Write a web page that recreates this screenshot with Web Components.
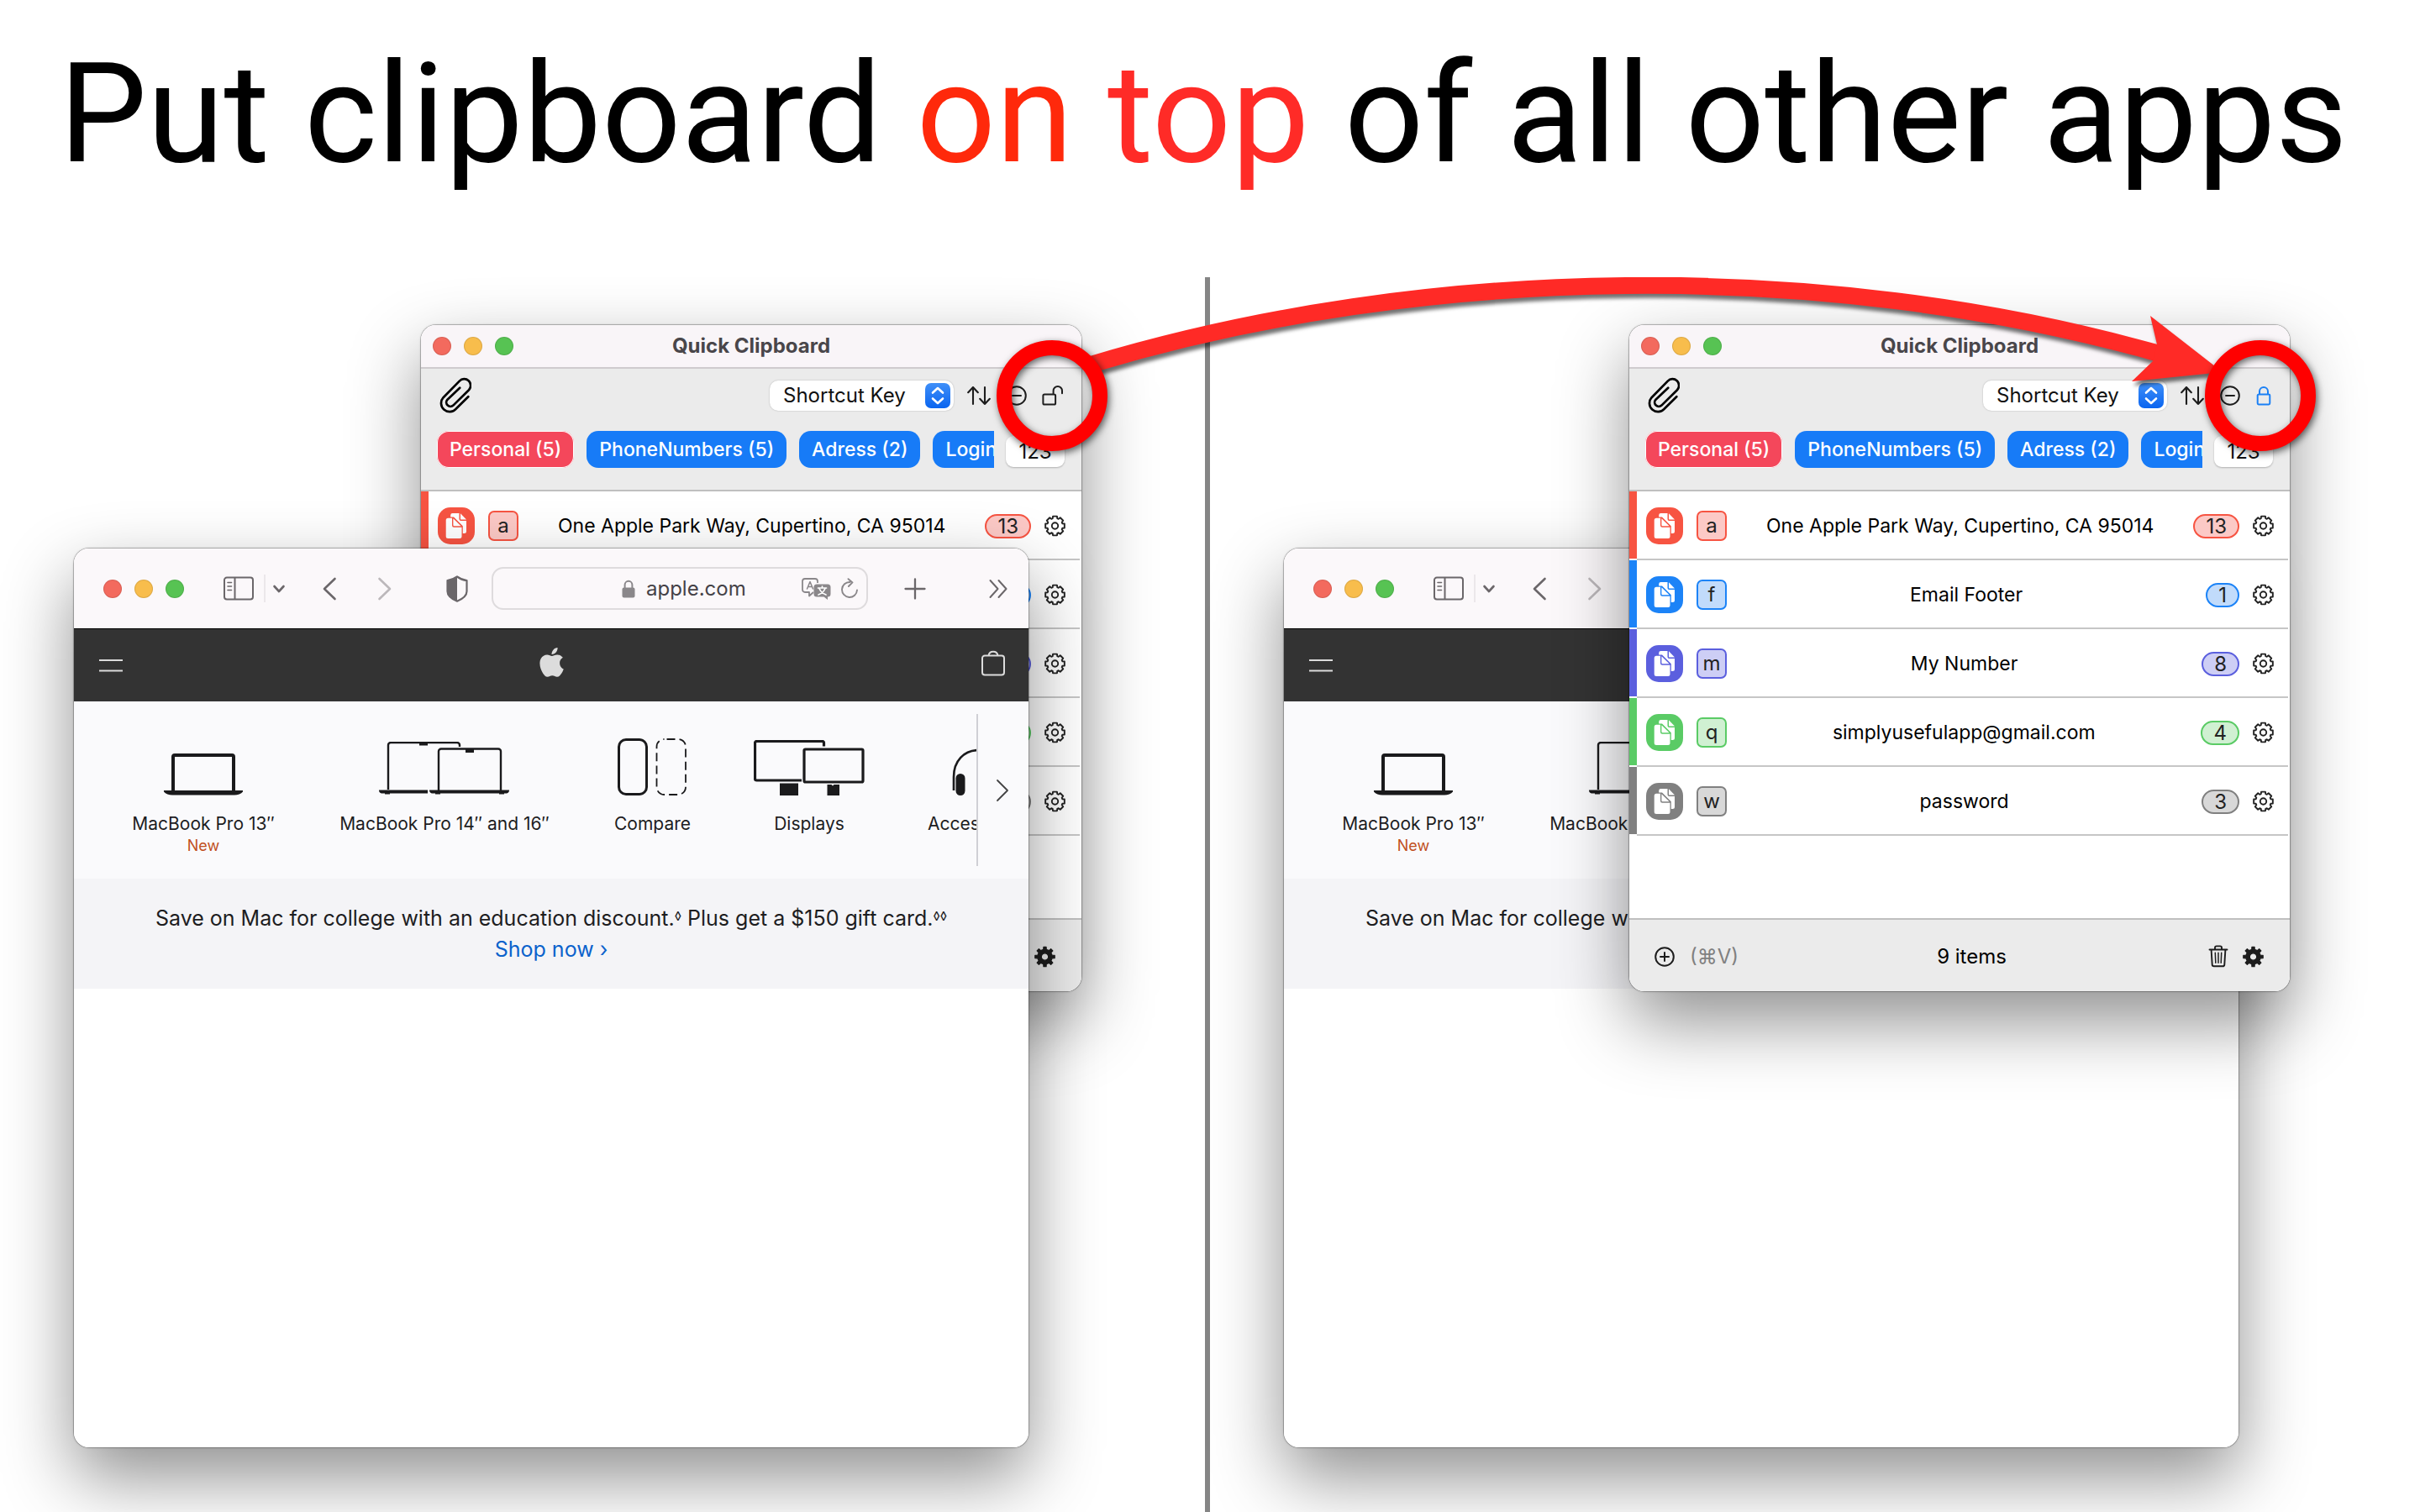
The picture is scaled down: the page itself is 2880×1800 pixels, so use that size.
<!DOCTYPE html>
<html lang="en">
<head>
<meta charset="utf-8">
<title>Quick Clipboard – keep on top</title>
<style>
  html, body { height: 100%; margin: 0; }
  body { background: #fff; font-family: Inter, "Liberation Sans", sans-serif; color: #000; }
</style>
</head>
<body>
<promo-page>
  <promo-title slot="title">Put clipboard <em>on</em> <strong>top</strong> of all other apps</promo-title>
  <desk-area slot="before">
    <clip-window></clip-window>
    <safari-window></safari-window>
  </desk-area>
  <desk-area slot="after">
    <safari-window></safari-window>
    <clip-window locked></clip-window>
  </desk-area>
  <callout-layer slot="callout"></callout-layer>
</promo-page>

<script>
const define = (name, css, html) => {
  customElements.define(name, class extends HTMLElement {
    constructor() {
      super();
      this.attachShadow({ mode: "open" });
    }
    connectedCallback() {
      if (this.shadowRoot.childNodes.length) return;
      const t = document.createElement("template");
      t.innerHTML = `<style>*{box-sizing:border-box}button{all:unset;display:flex;box-sizing:border-box}${css}</style>` +
        (typeof html === "function" ? html(this) : html);
      this.shadowRoot.append(t.content.cloneNode(true));
    }
  });
};

/* Cog outline: n teeth between the root and tip radii. */
const cog = (c, tip, root, n, half = .27, slope = .12) => {
  const step = Math.PI * 2 / n, pts = [];
  const at = (r, a) => (c + r * Math.sin(a)).toFixed(2) + " " + (c - r * Math.cos(a)).toFixed(2);
  for (let i = 0; i < n; i++) {
    const a = i * step, h = step * half, s = step * slope;
    pts.push(at(root, a - h - s), at(tip, a - h), at(tip, a + h), at(root, a + h + s));
  }
  return "M" + pts.join("L") + "Z";
};

const line = (d, w, extra = "") => `<path d="${d}" fill="none" stroke="currentColor" stroke-width="${w}" stroke-linecap="round" stroke-linejoin="round" ${extra}/>`;

const ICONS = {
  paperclip: [38, 44, line("M34.3 23.3 L19.6 37.8 A10 10 0 0 1 4.6 24.2 L23.8 4.6 A7.6 7.6 0 0 1 35 15.2 L16.4 33.6 A4.9 4.9 0 0 1 9.2 27 L24.2 12.8", 2.7)],
  sort: [28, 24, line("M7 22V2M1.2 8.2L7 2l5.8 6.2M21 2v20M15.2 15.8L21 22l5.8-6.2", 2.1)],
  minus: [24, 24, `<circle cx="12" cy="12" r="10.8" fill="none" stroke="currentColor" stroke-width="2"/>` + line("M7 12h10", 2)],
  plusCircle: [24, 24, `<circle cx="12" cy="12" r="10.8" fill="none" stroke="currentColor" stroke-width="2"/>` + line("M7 12h10M12 7v10", 2)],
  unlock: [26, 24, line("M3 10.5h11.5a1.6 1.6 0 0 1 1.6 1.6v8.8a1.6 1.6 0 0 1-1.6 1.6H3a1.6 1.6 0 0 1-1.6-1.6v-8.8a1.6 1.6 0 0 1 1.6-1.6zM13.6 10.5V6.2a5.2 5.2 0 0 1 10.4 0V9.3", 2)],
  lock: [20, 24, line("M4 10.5h12a1.3 1.3 0 0 1 1.3 1.3v9.3a1.3 1.3 0 0 1-1.3 1.3H4a1.3 1.3 0 0 1-1.3-1.3v-9.3A1.3 1.3 0 0 1 4 10.5zM5 10.5V7a5 5 0 0 1 10 0v3.5", 2)],
  gear: [25, 26, `<path d="${cog(12.5, 11.6, 9.2, 8)}" transform="translate(0 .5)" fill="none" stroke="currentColor" stroke-width="1.9" stroke-linejoin="round"/><circle cx="12.5" cy="13" r="3.7" fill="none" stroke="currentColor" stroke-width="1.9"/>`],
  gearFill: [25, 26, `<path d="${cog(12.5, 11.8, 8.8, 8, .17, .09)}M12.5 8.3a4.2 4.2 0 1 0 0 8.4a4.2 4.2 0 1 0 0-8.4Z" transform="translate(0 .5)" fill-rule="evenodd" fill="currentColor" stroke="currentColor" stroke-width="1.2" stroke-linejoin="round"/>`],
  trash: [24, 27, line("M1.5 5.5h21M8 5.2V3.2A1.8 1.8 0 0 1 9.8 1.4h4.4A1.8 1.8 0 0 1 16 3.2v2M3.6 5.8l1.1 17.6a2 2 0 0 0 2 1.9h10.6a2 2 0 0 0 2-1.9L20.4 5.8", 1.9) + line("M8.3 9.3l.5 12M12 9.3v12M15.7 9.3l-.5 12", 1.5)],
  copy: [44, 44, `<g fill="#fff"><path d="M17.500 7H25.500V14a2 2 0 0 0 2 2H34V28.500a2.500 2.500 0 0 1-2.500 2.500H29.800V22.200L19 11.500H15.200V9.300A2.300 2.300 0 0 1 17.500 7z"/><path d="M27 7.200L34 14.600H28.200A1.200 1.200 0 0 1 27 13.400z"/><path d="M12.200 12.800H17V21.500a2.200 2.200 0 0 0 2.200 2.200H28.500V34.500a2.500 2.500 0 0 1-2.500 2.500H12.200a2.500 2.500 0 0 1-2.500-2.500V15.300a2.500 2.500 0 0 1 2.500-2.500z"/><path d="M18.400 13.200L27.600 22.300H19.600A1.200 1.200 0 0 1 18.400 21.100z"/></g>`],
  stepper: [30, 30, `<defs><linearGradient id="g" x2="0" y2="1"><stop stop-color="#3f8ff8"/><stop offset="1" stop-color="#0a65f0"/></linearGradient></defs><rect width="30" height="30" rx="7" fill="url(#g)"/><path d="M9 11.500l6-5.500 6 5.500M9 18.500l6 5.500 6-5.500" fill="none" stroke="#fff" stroke-width="2.600" stroke-linecap="round" stroke-linejoin="round"/>`],
  sidebar: [36, 30, line("M4 1.500h28a3 3 0 0 1 3 3v20a3 3 0 0 1-3 3H4a3 3 0 0 1-3-3v-20a3 3 0 0 1 3-3zM13.500 2v25.500", 2) + line("M5 7.500h4.500M5 12h4.500M5 16.500h4.500", 1.6)],
  chevDown: [16, 12, line("M2.500 3l5.500 6 5.500-6", 2.6)],
  back: [18, 28, line("M15.500 2L3 14l12.500 12", 2.6)],
  forward: [18, 28, line("M2.500 2L15 14 2.500 26", 2.6)],
  shield: [26, 32, `<path d="M13 1.500c3.500 2.600 7 4 11.500 4.600V19c0 6-5 9-11.500 11.700C6.500 28 1.500 25 1.500 19V6.100C6 5.500 9.500 4.100 13 1.500z" fill="none" stroke="currentColor" stroke-width="2.200" stroke-linejoin="round"/><path d="M13 1.500C9.500 4.100 6 5.500 1.500 6.100V19c0 6 5 9 11.500 11.700z" fill="currentColor"/>`],
  padlock: [16, 22, `<rect x=".5" y="9.500" width="15" height="12" rx="2" fill="currentColor"/><path d="M3.600 10.500V6.200a4.400 4.400 0 0 1 8.800 0v4.300" fill="none" stroke="currentColor" stroke-width="2"/>`],
  translate: [35, 26, `<path d="M14 17l-5 4.500V17H4a3 3 0 0 1-3-3V4a3 3 0 0 1 3-3h12a3 3 0 0 1 3 3v2" fill="none" stroke="currentColor" stroke-width="1.800" stroke-linejoin="round"/><path d="M18 7.500h13a3.500 3.500 0 0 1 3.500 3.500v8a3.500 3.500 0 0 1-3.500 3.500v3.500l-4.500-3.500H18a3.500 3.500 0 0 1-3.500-3.500v-8A3.500 3.500 0 0 1 18 7.500z" fill="currentColor"/>` + line("M6.500 13L10 4.500l3.500 8.500M7.700 10.500h4.600", 1.5) + `<path d="M19.500 12h10M24.500 10v2M21 12.500c1.500 4 4 6 8 7.500M28 12.500c-1.500 4-4 6-8 7.500" fill="none" stroke="#fff" stroke-width="1.700" stroke-linecap="round"/>`],
  reload: [20, 26, line("M10.500 5a9 9 0 1 0 8.500 9.500M8.500 1.200l5 4.200-4.600 4.600", 1.9)],
  plus: [26, 26, line("M13 1.500v23M1.500 13h23", 2.3)],
  more: [24, 24, line("M2.500 2l9 10-9 10M12.500 2l9 10-9 10", 2)],
  menu: [28, 16, `<path d="M0 2h28M0 14.500h28" stroke="currentColor" stroke-width="2"/>`],
  bag: [28, 34, line("M4 8.500h20a3 3 0 0 1 3 3v17a3 3 0 0 1-3 3H4a3 3 0 0 1-3-3v-17a3 3 0 0 1 3-3zM8.500 8.200a5.600 5.600 0 0 1 11 0", 2)],
  apple: [30, 36, `<path transform="translate(-2.800 0) scale(1.450)" d="M12.152 6.896c-.948 0-2.415-1.078-3.960-1.040-2.040.027-3.910 1.183-4.961 3.014-2.117 3.675-.546 9.103 1.519 12.090 1.013 1.454 2.208 3.090 3.792 3.039 1.520-.065 2.090-.987 3.935-.987 1.831 0 2.350.987 3.960.948 1.637-.026 2.676-1.480 3.676-2.948 1.156-1.688 1.636-3.325 1.662-3.415-.039-.013-3.182-1.221-3.220-4.857-.026-3.040 2.480-4.494 2.597-4.559-1.429-2.090-3.623-2.324-4.390-2.376-2-.156-3.675 1.090-4.610 1.090zM15.530 3.830c.843-1.012 1.400-2.427 1.245-3.830-1.207.052-2.662.805-3.532 1.818-.780.896-1.454 2.338-1.273 3.714 1.338.104 2.715-.688 3.559-1.701" fill="currentColor"/>`],
  chevRight: [18, 28, line("M2 2l12 12L2 26", 1.8)],
  laptop: [94, 50, `<path d="M11 46V4a2 2 0 0 1 2-2h68a2 2 0 0 1 2 2v42" fill="none" stroke="#1a1a1c" stroke-width="4"/><path d="M0 44h94v1.500c-2 2.500-6 4-10 4H10c-4 0-8-1.500-10-4z" fill="#1a1a1c"/>`],
  laptops: [156, 64, `<path d="M11 57V4a3 3 0 0 1 3-3h79a3 3 0 0 1 3 3v2" fill="none" stroke="#1a1a1c" stroke-width="2.400"/><path d="M48 1h10v3.500h-10z" fill="#1a1a1c"/><path d="M0 57.500h58v4H13v1H7v-1H3a4 4 0 0 1-3-4z" fill="#1a1a1c"/><path d="M71 58V11.500a3 3 0 0 1 3-3h68a3 3 0 0 1 3 3V58" fill="none" stroke="#1a1a1c" stroke-width="2.400"/><path d="M103 9h10v4h-10z" fill="#1a1a1c"/><path d="M60 57.500h95a4 4 0 0 1-3 4h-3v1h-6v-1H73v1h-6v-1h-4a4 4 0 0 1-3-4z" fill="#1a1a1c"/>`],
  compare: [82, 68, `<rect x="1.500" y="1.500" width="33" height="65" rx="8.500" fill="none" stroke="#1a1a1c" stroke-width="3"/><rect x="46.500" y="1" width="34.500" height="66" rx="9" fill="none" stroke="#1a1a1c" stroke-width="1.800" stroke-dasharray="10 5.080" stroke-dashoffset="-3"/>`],
  displays: [132, 66, `<path d="M57 48H3.500a2 2 0 0 1-2-2V3.500a2 2 0 0 1 2-2H81.500a2 2 0 0 1 2 2V7.500" fill="none" stroke="#1a1a1c" stroke-width="3.200"/><rect x="60" y="11" width="70" height="39" rx="1.500" fill="none" stroke="#1a1a1c" stroke-width="3.200"/><path d="M31 51.500h22V66H31zM87.500 53h5l1.500 1.500 1.500-1.500h6.500V66H87.500z" fill="#1a1a1c"/>`],
  headphones: [64, 56, `<path d="M2 50V34C2 15 14 2 32 2s30 13 30 32v16" fill="none" stroke="#1a1a1c" stroke-width="2.600"/><rect x="4.500" y="30" width="11" height="26" rx="5.500" fill="#1a1a1c"/><rect x="48.500" y="30" width="11" height="26" rx="5.500" fill="#1a1a1c"/>`]
};

define("ui-icon", `:host{display:inline-flex;flex:none}svg{display:block}`, el => {
  const [w, h, body] = ICONS[el.getAttribute("name")];
  return `<svg width="${w}" height="${h}" viewBox="0 0 ${w} ${h}" aria-hidden="true">${body}</svg>`;
});

define("traffic-lights", `
  :host{display:flex;gap:15px;flex:none}
  button{width:22px;height:22px;border-radius:50%;border:1px solid rgba(0,0,0,.1)}
  .close{background:#f36a5e}.min{background:#f8bd4c}.zoom{background:#57c353}`,
  `<button class="close" aria-label="Close"></button><button class="min" aria-label="Minimise"></button><button class="zoom" aria-label="Zoom"></button>`);

define("promo-title", `
  :host{display:block}
  h1{margin:0;font:400 166px/200px Roboto,"Liberation Sans",sans-serif;text-align:center;white-space:nowrap}
  ::slotted(em){font-style:normal;color:#ff290b}
  ::slotted(strong){font-weight:400;color:#ff2b27}`,
  `<h1><slot></slot></h1>`);

define("promo-page", `
  :host{display:flex;flex-direction:column;min-height:100vh;overflow:hidden;position:relative}
  header{padding:36px 16px 94px 0}
  main{flex:1;display:grid;grid-template-columns:1434fr 6px 1440fr;position:relative;overflow:hidden}
  .rule{background:#858585}`,
  `<header><slot name="title"></slot></header>
   <main><slot name="before"></slot><div class="rule"></div><slot name="after"></slot><slot name="callout"></slot></main>`);

/* A free canvas: the two windows overlap, the later one on top. */
define("desk-area", `
  :host{display:block;position:relative;min-width:0}
  ::slotted(*){position:absolute}
  ::slotted(safari-window){left:88px;top:323px}
  ::slotted(clip-window){left:501px;top:57px}
  ::slotted(clip-window[locked]){left:499px}`, `<slot></slot>`);

const WINDOW = `
  :host{display:flex;flex-direction:column;border-radius:18px;
    box-shadow:0 0 0 1px rgba(0,0,0,.2),0 0 3px rgba(0,0,0,.25),0 36px 84px rgba(0,0,0,.44)}
  .frame{flex:1;display:flex;flex-direction:column;border-radius:18px;overflow:hidden;background:#fff;min-height:0}`;

define("clip-row", `
  :host{--c:#f75442;--t:#fcc9c6;display:flex;align-items:center;height:82px;position:relative}
  :host([tone=blue]){--c:#1c83f7;--t:#c1dbfb}
  :host([tone=indigo]){--c:#5b5fde;--t:#cdcef5}
  :host([tone=green]){--c:#5acb65;--t:#d0f0d2}
  :host([tone=gray]){--c:#808080;--t:#d8d8d8}
  .bar{width:9px;height:80px;align-self:flex-start;background:var(--c)}
  .body{flex:1;height:82px;margin-right:2px;padding:2px 17px 0 11px;display:flex;align-items:center;border-bottom:2px solid #c6c6c6}
  .copy{width:44px;height:44px;border-radius:15px;background:var(--c)}
  kbd{width:36px;height:36px;margin-left:16px;border:2px solid var(--c);border-radius:7px;background:var(--t);color:#222;font:400 24px/31px Inter,sans-serif;text-align:center}
  .text{flex:1;text-align:center;font-size:23px;line-height:32px;white-space:nowrap}
  .count{height:29px;padding:0 13px;border:2px solid var(--c);border-radius:15px;background:var(--t);color:#222;font-size:24px;line-height:26px}
  .gear{margin-left:16px;color:#222}`,
  el => `<div class="bar"></div><div class="body">
    <button class="copy" aria-label="Copy"><ui-icon name="copy"></ui-icon></button>
    <kbd>${el.getAttribute("key")}</kbd><span class="text"><slot></slot></span>
    <span class="count">${el.getAttribute("count")}</span>
    <button class="gear" aria-label="Edit item"><ui-icon name="gear"></ui-icon></button></div>`);

define("clip-window", WINDOW + `
  :host{width:786px;height:793px}
  .title{height:52px;display:grid;grid-template-columns:1fr auto 1fr;align-items:center;padding:0 14px;background:#f9f5f8;border-bottom:2px solid #cfcbce}
  h2{margin:0;font:700 24px/32px Inter,sans-serif;color:#49464a}
  .tools{height:146px;background:#ebebeb;border-bottom:2px solid #bfbfbf;padding:10px 0 0 19px}
  .row{display:flex;align-items:center}
  .first{height:44px;padding:0 21px 0 3px;color:#1d1d1d}
  .clip{color:#000;margin-right:auto}
  .pick{display:flex;position:relative;align-items:center;width:219px;height:36px;margin-right:16px;border-radius:10px;background:#fff;box-shadow:0 0 2px rgba(0,0,0,.25)}
  select{all:unset;box-sizing:border-box;flex:1;width:100%;padding-left:16px;font:400 24px/36px Inter,sans-serif;color:#111}
  .pick ui-icon{position:absolute;right:4px;top:3px;pointer-events:none}
  .min{margin:0 18px 0 19px}
  .lock{color:#1b80f5}
  .second{height:44px;margin-top:20px;padding-right:20px}
  .tags{width:664px;display:flex;gap:15px;overflow:hidden}
  .tags button{height:44px;padding:0 15px;border-radius:14px;background:#177bf7;color:#fff;font:500 23px/44px Inter,sans-serif;white-space:nowrap;flex:none}
  .tags button.on{background:#f4475b;box-shadow:inset 0 0 0 1px #fff}
  .num{width:70px;height:37px;margin:4px 0 0 14px;justify-content:center;border-radius:9px;background:#fff;box-shadow:0 1px 2px rgba(0,0,0,.25);font:400 24px/37px Inter,sans-serif;color:#111}
  .list{flex:1}
  footer{height:87px;display:flex;align-items:center;background:#ebebeb;border-top:2px solid #bfbfbf;padding:2px 31px 0 30px;color:#1d1d1d;font-size:24px}
  .hint{margin-left:18px;color:#808080}
  .items{flex:1;text-align:center;color:#000;padding-right:4px}
  .trash{margin-right:17px}`,
  el => `<div class="frame">
    <div class="title"><traffic-lights></traffic-lights><h2>Quick Clipboard</h2></div>
    <div class="tools">
      <div class="row first">
        <ui-icon class="clip" name="paperclip"></ui-icon>
        <label class="pick"><select aria-label="Sort by"><option>Shortcut Key</option></select><ui-icon name="stepper"></ui-icon></label>
        <button aria-label="Sort order"><ui-icon name="sort"></ui-icon></button>
        <button class="min" aria-label="Remove"><ui-icon name="minus"></ui-icon></button>
        ${el.hasAttribute("locked")
          ? `<button class="lock" aria-label="On top"><ui-icon name="lock"></ui-icon></button>`
          : `<button aria-label="Not on top"><ui-icon name="unlock"></ui-icon></button>`}
      </div>
      <div class="row second">
        <div class="tags"><button class="on">Personal (5)</button><button>PhoneNumbers (5)</button><button>Adress (2)</button><button>Login</button></div>
        <button class="num">123</button>
      </div>
    </div>
    <div class="list">
      <clip-row key="a" count="13">One Apple Park Way, Cupertino, CA 95014</clip-row>
      <clip-row tone="blue" key="f" count="1">Email Footer</clip-row>
      <clip-row tone="indigo" key="m" count="8">My Number</clip-row>
      <clip-row tone="green" key="q" count="4">simplyusefulapp@gmail.com</clip-row>
      <clip-row tone="gray" key="w" count="3">password</clip-row>
    </div>
    <footer>
      <button aria-label="Add"><ui-icon name="plusCircle"></ui-icon></button><span class="hint">(⌘V)</span>
      <span class="items">9 items</span>
      <button class="trash" aria-label="Delete"><ui-icon name="trash"></ui-icon></button>
      <button aria-label="Settings"><ui-icon name="gearFill"></ui-icon></button>
    </footer></div>`);

define("chapter-item", `
  :host{display:flex;flex-direction:column;align-items:center;white-space:nowrap;color:#1d1d1f}
  a{display:flex;flex-direction:column;align-items:center;color:inherit;text-decoration:none;font-size:21px;line-height:28px}
  .art{height:68px;display:flex;align-items:flex-end;margin-bottom:20px}
  small{font-size:18px;line-height:24px;color:#c1501c}`,
  el => `<a href="#"><span class="art"><ui-icon name="${el.getAttribute("art")}"></ui-icon></span><slot></slot>
    ${el.hasAttribute("badge") ? `<small>${el.getAttribute("badge")}</small>` : ""}</a>`);

define("safari-window", WINDOW + `
  :host{width:1136px;height:1070px}
  .bar{height:95px;display:flex;align-items:center;padding:0 24px 0 35px;background:#fbf8fa;color:#6b676a}
  .side{margin-left:47px}
  .sep{width:2px;height:33px;margin:0 8px 0 12px;background:#ebe7ea}
  .back{margin-left:43px}
  .fwd{margin-left:48px;color:#bcb8bb}
  .shield{margin-left:64px}
  .url{width:448px;height:51px;margin-left:28px;padding:0 10px 0 153px;display:flex;align-items:center;border:2px solid #dedbdd;border-radius:14px}
  .url ui-icon{color:#8a878a}
  input{all:unset;box-sizing:border-box;width:130px;margin:0 auto 0 13px;font:400 24px/32px Inter,sans-serif;color:#454247}
  .reload{margin-left:12px}
  .new{margin:0 auto 0 43px}
  nav.global{height:87px;display:flex;align-items:center;justify-content:space-between;padding:0 28px 0 30px;background:#333;border-top:1px solid #000;color:#dcdcdc}
  nav a{color:inherit;display:flex}
  nav a.mark{padding-bottom:6px}
  .chapters{height:211px;display:flex;align-items:center;background:#fafafc}
  .strip{width:1076px;height:181px;padding:29px 0 0 69px;border-right:2px solid #d0d0d5;overflow:hidden;
    display:grid;grid-template-columns:170px 254px 91px 132px 122px;column-gap:75px;align-items:start;justify-items:center}
  .next{margin:0 auto;color:#444}
  .promo{height:131px;padding:29px 0 0;background:#f4f4f7;text-align:center;font-size:25px;line-height:37px;color:#1d1d1f}
  .promo p{margin:0}
  .promo a{color:#0b62cc;text-decoration:none}
  sup{font-size:15px;line-height:0;vertical-align:6px}`,
  `<div class="frame">
    <div class="bar">
      <traffic-lights></traffic-lights>
      <button class="side" aria-label="Sidebar"><ui-icon name="sidebar"></ui-icon></button>
      <span class="sep"></span>
      <button aria-label="Tab groups"><ui-icon name="chevDown"></ui-icon></button>
      <button class="back" aria-label="Back"><ui-icon name="back"></ui-icon></button>
      <button class="fwd" aria-label="Forward"><ui-icon name="forward"></ui-icon></button>
      <button class="shield" aria-label="Privacy report"><ui-icon name="shield"></ui-icon></button>
      <div class="url"><ui-icon name="padlock"></ui-icon><input type="text" aria-label="Address" value="apple.com">
        <button aria-label="Translate"><ui-icon name="translate"></ui-icon></button>
        <button class="reload" aria-label="Reload"><ui-icon name="reload"></ui-icon></button></div>
      <button class="new" aria-label="New tab"><ui-icon name="plus"></ui-icon></button>
      <button aria-label="More"><ui-icon name="more"></ui-icon></button>
    </div>
    <nav class="global">
      <a href="#" aria-label="Menu"><ui-icon name="menu"></ui-icon></a>
      <a class="mark" href="#" aria-label="Apple"><ui-icon name="apple"></ui-icon></a>
      <a class="mark" href="#" aria-label="Bag"><ui-icon name="bag"></ui-icon></a>
    </nav>
    <div class="chapters">
      <div class="strip">
        <chapter-item art="laptop" badge="New">MacBook Pro 13″</chapter-item>
        <chapter-item art="laptops">MacBook Pro 14″ and 16″</chapter-item>
        <chapter-item art="compare">Compare</chapter-item>
        <chapter-item art="displays">Displays</chapter-item>
        <chapter-item art="headphones">Accessories</chapter-item>
      </div>
      <button class="next" aria-label="Next"><ui-icon name="chevRight"></ui-icon></button>
    </div>
    <div class="promo">
      <p>Save on Mac for college with an education discount.<sup>◊</sup> Plus get a $150 gift card.<sup>◊◊</sup></p>
      <p><a href="#">Shop now ›</a></p>
    </div>
  </div>`);

define("callout-layer", `
  :host{position:absolute;inset:0;pointer-events:none}
  svg{display:block;width:100%;height:100%}
  .arrow{filter:drop-shadow(2px 5px 2px rgba(0,0,0,.55))}
  .ring{filter:drop-shadow(2px 3px 4px rgba(0,0,0,.6))}`,
  `<svg viewBox="0 330 2880 1470" preserveAspectRatio="xMinYMin meet" aria-hidden="true">
    <g class="arrow"><path d="M1298 434C1700 313 2172 309 2566 420" fill="none" stroke="#ff2a26" stroke-width="20"/>
    <path d="M2559 376L2567 410L2562 430L2537 454L2645 443Z" fill="#ff2a26"/></g>
    <g class="ring" fill="none" stroke="#f00" stroke-width="18"><circle cx="1252" cy="471" r="57"/><circle cx="2690" cy="471" r="57"/></g>
  </svg>`);
</script>
</body>
</html>
